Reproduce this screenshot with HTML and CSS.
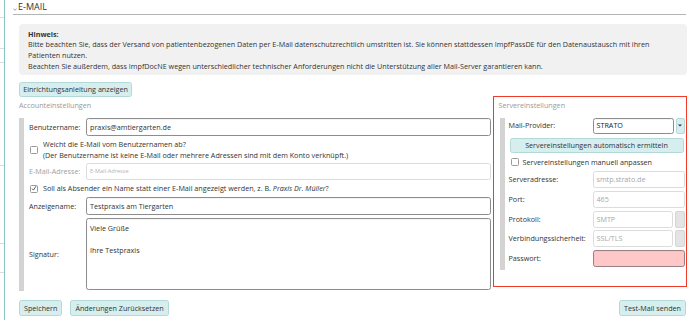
FILE: index.html
```html
<!DOCTYPE html>
<html lang="de">
<head>
<meta charset="utf-8">
<link rel="stylesheet" href="styles.css">
</head>
<body>
<div class="page">
  <div class="sidebar">
    <div class="sb-item sb1"></div>
    <div class="sb-item sb2"></div>
    <div class="sb-item sb3"></div>
    <div class="sb-item sb4"></div>
    <div class="sb-item sb5"></div>
    <div class="sb-item sb6"></div>
  </div>
  <div class="main">
    <div class="section-head">
      <svg class="chev" width="4" height="3" viewBox="0 0 4 3"><path d="M0.3 0.5 L2 2.3 L3.7 0.5" fill="none" stroke="#777" stroke-width="0.7"/></svg>
      <span>E-MAIL</span>
    </div>
    <div class="content">
      <div class="hint">
        <div class="b">Hinweis:</div>
        <div>Bitte beachten Sie, dass der Versand von patientenbezogenen Daten per E-Mail datenschutzrechtlich umstritten ist. Sie können stattdessen ImpfPassDE für den Datenaustausch mit ihren Patienten nutzen.</div>
        <div>Beachten Sie außerdem, dass ImpfDocNE wegen unterschiedlicher technischer Anforderungen nicht die Unterstützung aller Mail-Server garantieren kann.</div>
      </div>
      <div class="btn guide">Einrichtungsanleitung anzeigen</div>
      <div class="cols">
        <div class="account">
          <div class="legend">Accounteinstellungen</div>
          <div class="panel">
            <div class="row r1"><div class="lbl">Benutzername:</div><div class="inp">praxis@amtiergarten.de</div></div>
            <div class="crow r2"><span class="cb"></span><div>Weicht die E-Mail vom Benutzernamen ab?<br>(Der Benutzername ist keine E-Mail oder mehrere Adressen sind mit dem Konto verknüpft.)</div></div>
            <div class="row r3"><div class="lbl dim">E-Mail-Adresse:</div><div class="inp dis"><span class="ph">E-Mail-Adresse</span></div></div>
            <div class="crow r4"><span class="cb checked"><svg width="7" height="7" viewBox="0 0 7 7"><path d="M1.2 3.6 L2.8 5.4 L5.9 0.8" fill="none" stroke="#333" stroke-width="0.9"/></svg></span><div>Soll als Absender ein Name statt einer E-Mail angezeigt werden, z. B. <i>Praxis Dr. Müller</i>?</div></div>
            <div class="row r5"><div class="lbl">Anzeigename:</div><div class="inp">Testpraxis am Tiergarten</div></div>
            <div class="row r6"><div class="lbl">Signatur:</div><div class="inp area">Viele Grüße<br><br>Ihre Testpraxis</div></div>
          </div>
        </div>
        <div class="server">
          <div class="legend">Servereinstellungen</div>
          <div class="panel">
            <div class="row s1"><div class="lbl">Mail-Provider:</div><div class="sel"><div class="inp">STRATO</div><div class="dd"><svg width="4" height="3" viewBox="0 0 4 3"><path d="M0 0.4 H4 L2 2.6 Z" fill="#333"/></svg></div></div></div>
            <div class="btn auto">Servereinstellungen automatisch ermitteln</div>
            <div class="crow s3"><span class="cb"></span><div>Servereinstellungen manuell anpassen</div></div>
            <div class="row s4"><div class="lbl">Serveradresse:</div><div class="inp dis">smtp.strato.de</div></div>
            <div class="row s5"><div class="lbl">Port:</div><div class="inp dis">465</div></div>
            <div class="row s6"><div class="lbl">Protokoll:</div><div class="sel"><div class="inp dis">SMTP</div><div class="dd dis"></div></div></div>
            <div class="row s7"><div class="lbl">Verbindungssicherheit:</div><div class="sel"><div class="inp dis">SSL/TLS</div><div class="dd dis"></div></div></div>
            <div class="row s8"><div class="lbl">Passwort:</div><div class="inp pw"></div></div>
          </div>
        </div>
      </div>
      <div class="footer">
        <div class="left">
          <div class="btn">Speichern</div>
          <div class="btn">Änderungen Zurücksetzen</div>
        </div>
        <div class="btn">Test-Mail senden</div>
      </div>
    </div>
  </div>
</div>
</body>
</html>
```

FILE: styles.css
```css
* { box-sizing: border-box; }
html, body { margin: 0; padding: 0; background: #fff; }
body {
  font-family: "Open Sans", "Liberation Sans", sans-serif;
  font-size: 7.2px;
  line-height: 10.75px;
  color: #333;
  width: 688px;
  height: 320px;
  overflow: hidden;
}
.page { display: flex; height: 320px; }
.sidebar {
  width: 5px;
  flex: none;
  border-right: 1.5px solid #86c6c6;
  display: flex;
  flex-direction: column;
}
.sb-item { height: 0; border-bottom: 1px solid #d8dcdc; width: 3.5px; }
.sb1 { margin-top: 17px; }
.sb2 { margin-top: 30px; }
.sb3 { margin-top: 13px; }
.sb4 { margin-top: 102px; }
.sb5 { margin-top: 77px; }
.sb6 { margin-top: 28px; }

.main { flex: 1; padding: 0 3px 0 7px; }
.section-head {
  display: flex;
  align-items: center;
  gap: 1.5px;
  height: 15px;
  padding-top: 1px;
  margin-right: 1px;
  margin-left: 1px;
  border-bottom: 1px solid #b4b4b4;
  font-size: 9px;
  color: #333;
}
.chev { margin-top: 4px; margin-left: -0.5px; }
.content { padding-left: 7px; }
.hint {
  margin-top: 9px;
  height: 51px;
  background: #f2f1f1;
  border-radius: 4px;
  padding: 4.5px 9px 0;
  color: #333;
}
.b { font-weight: bold; }
.btn {
  display: inline-flex;
  align-items: center;
  justify-content: center;
  height: 16px;
  padding: 0 4px;
  background: #d6eeee;
  border: 1px solid #b3d9d9;
  border-radius: 2.5px;
  color: #333;
  white-space: nowrap;
}
.guide { margin-top: 7px; height: 15px; width: 113px; }
.cols { display: flex; gap: 2px; margin-top: -1px; align-items: flex-start; }
.account { width: 472px; flex: none; }
.server {
  width: 194px;
  flex: none;
  border: 1.5px solid #ef3b28;
  padding: 0 1.5px 15.5px 4.5px;
}
.legend { height: 20px; line-height: 19.5px; color: #9a9a9a; }
.server .legend { height: 18.5px; line-height: 17.5px; }
.panel {
  border-left: 5px solid #d3d3d3;
  padding-left: 4px;
  padding-bottom: 1px;
}
.server .panel { margin-left: 1px; padding-bottom: 3px; }
.row { display: flex; align-items: center; }
.lbl { width: 58px; flex: none; padding-left: 1px; white-space: nowrap; }
.server .lbl { width: 84px; padding-left: 0; }
.dim { color: #a0a0a0; }
.inp {
  flex: 1;
  height: 100%;
  border: 1px solid #8d8d8d;
  border-radius: 2.5px;
  padding: 0 3px;
  display: flex;
  align-items: center;
  background: #fff;
  white-space: nowrap;
  overflow: hidden;
  box-shadow: inset 0 0.5px 1px rgba(0,0,0,0.08);
}
.inp.dis { border-color: #dcdcdc; color: #a8a8a8; box-shadow: none; }
.ph { font-size: 5.6px; color: #b4b4b4; }
.inp.area { align-items: flex-start; padding-top: 4px; }
.inp.pw { background: #ffc8c8; border-color: #9a8080; }
.crow { display: flex; align-items: center; }
.cb {
  width: 8px; height: 8px; flex: none;
  border: 1px solid #9a9a9a;
  border-radius: 1.5px;
  background: #fff;
  margin-left: 2px;
  margin-right: 5px;
  display: flex; align-items: center; justify-content: center;
}
.r1 { margin-top: 2px; height: 18px; }
.r2 { margin-top: 3px; height: 21.5px; }
.r3 { margin-top: 2.5px; height: 17px; }
.r4 { margin-top: 3px; height: 11px; }
.r5 { margin-top: 3px; height: 18px; }
.r6 { margin-top: 3px; height: 72px; }

.sel { flex: 1; height: 100%; display: flex; gap: 2px; }
.dd {
  width: 9px; flex: none;
  background: #d6eeee;
  border: 1px solid #b3d9d9;
  border-radius: 2px;
  display: flex; align-items: center; justify-content: center;
}
.dd.dis { background: #e4e4e4; border-color: #d6d6d6; width: 10px; }
.s1 { margin-top: 2px; height: 16px; }
.s1 .inp { color: #222; }
.auto { display: flex; margin-top: 4px; margin-left: 1px; height: 15px; width: 174px; }
.s3 { margin-top: 4px; height: 11px; }
.s3 .cb { margin-left: 2px; margin-right: 4px; }
.s4 { margin-top: 3.5px; height: 17px; }
.s5 { margin-top: 3px; height: 17px; }
.s6 { margin-top: 3px; height: 17px; }
.s7 { margin-top: 2px; height: 17px; }
.s8 { margin-top: 3px; height: 17px; }

.footer {
  display: flex;
  justify-content: space-between;
  margin-top: 9px;
  margin-right: 1px;
}
.footer .left { display: flex; gap: 8px; }
```
